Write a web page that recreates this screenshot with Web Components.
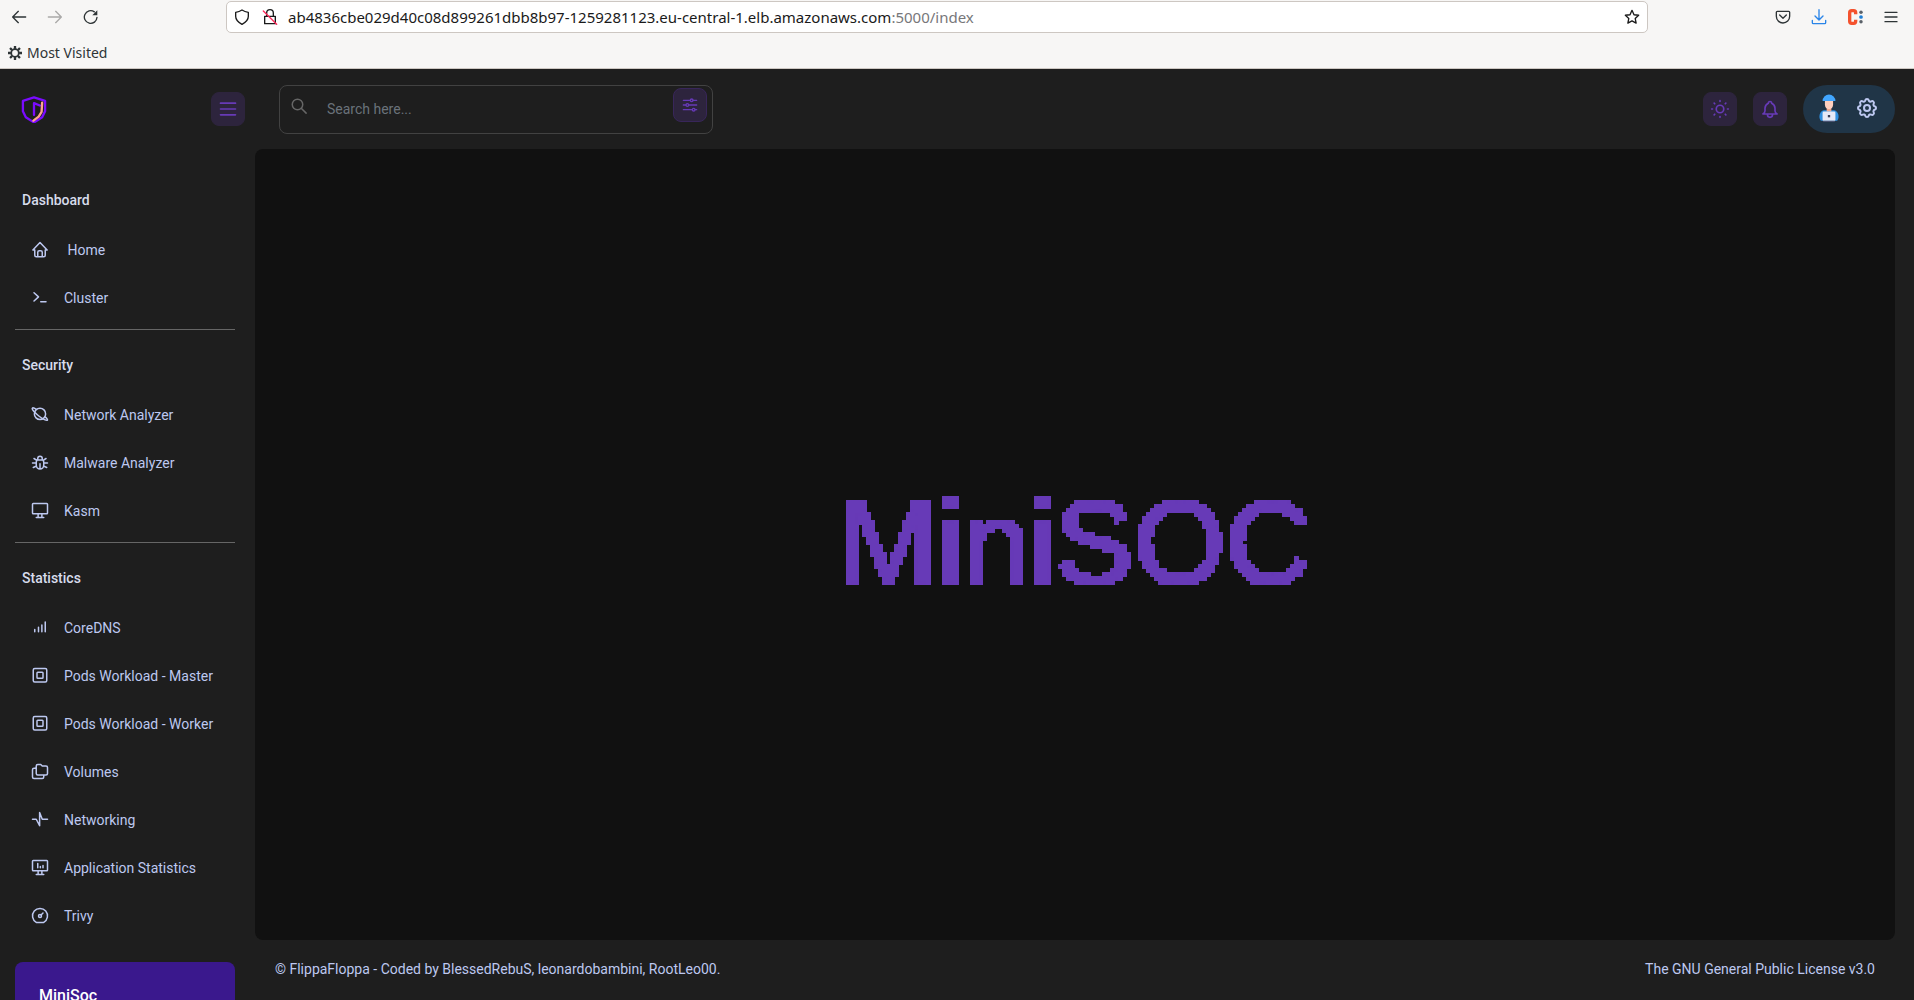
<!DOCTYPE html>
<html lang="en">
<head>
<meta charset="utf-8">
<title>MiniSOC</title>
<style>
  :root { --bg: #1e1e1e; --panel: #111111; --accent: #673ab7; --tint: #2d243d; --text: #bdc8f0; --head: #d7dcec; }
  html, body { height: 100%; }
  body { margin: 0; background: var(--bg); color: var(--text); font: 14px/20px Roboto, "Liberation Sans", sans-serif; overflow: hidden; }
</style>
</head>
<body>
<soc-app></soc-app>
<script>
const ICONS = {
  home: '<path d="M5 12H2.500L12 2l9.500 10H19M5 12v7a2 2 0 0 0 2 2h10a2 2 0 0 0 2-2v-7M9 21v-6a2 2 0 0 1 2-2h2a2 2 0 0 1 2 2v6"/>',
  prompt: '<path d="M4 5l6 5.500L4 16M13 17h7"/>',
  planet: '<path d="M18.800 14.600c2.500 2 3.500 3.700 3.100 4.200-.8 1.200-6.200-1.300-11.500-5.500S.900 4.100 1.800 2.900c.4-.6 2.800-.2 5.400 1.500"/><circle cx="12" cy="10.500" r="7.500"/>',
  bug: '<path d="M9 8V6a3 3 0 0 1 6 0v2M8 8h8a6 6 0 0 1 1 3v4a5 5 0 0 1-10 0v-4a6 6 0 0 1 1-3M2 12h5M17 12h5M12 20v-7M3 18l4.400-2M21 18l-4.400-2M4 6l3.800 2.400M20 6l-3.800 2.400"/>',
  desktop: '<rect x="2" y="2" width="20" height="13.500" rx="1"/><path d="M7 20.500h10M9.500 16v4M14.500 16v4"/>',
  bars: '<path d="M5 17v-3M10 17v-6M14.500 17V8M19 17V4"/>',
  frame: '<rect x="3" y="2" width="18" height="18" rx="2"/><rect x="8" y="7" width="8" height="8" rx="1"/>',
  folders: '<path d="M9 2h4l2 2h5a2 2 0 0 1 2 2v8a2 2 0 0 1-2 2H9a2 2 0 0 1-2-2V4a2 2 0 0 1 2-2M17 16v2.500a2 2 0 0 1-2 2H4a2 2 0 0 1-2-2V9a2 2 0 0 1 2-2h2"/>',
  pulse: '<path d="M2 11h5l4.500 8.500V2L15 11h7"/>',
  analytics: '<rect x="2" y="2" width="20" height="13.500" rx="1"/><path d="M7 20.500h10M9.500 16v4M14.500 16v4M9 11.500V6M12.500 11.500v-1.500M16 11.500V8.500"/>',
  gauge: '<path d="M7 20.500a10 10 0 1 1 10 0z"/><circle cx="12" cy="12" r="2"/><path d="M13.400 10.600L16 8"/>',
  menu: '<path d="M3 5h18M3 12h18M3 19h18"/>',
  sun: '<circle cx="12" cy="12" r="4.500"/><path d="M2 12h1M21 12h1M12 2v1M12 21v1M5 5l.7.7M18.300 18.300l.7.7M5 19l.7-.7M18.300 5.700l.7-.7"/>',
  bell: '<path d="M10 5a2 2 0 0 1 4 0 7 7 0 0 1 4 6v3c0 2 1 3 2.500 4H3.500C5 17 6 16 6 14v-3a7 7 0 0 1 4-6M9 18v1a3 3 0 0 0 6 0v-1"/>',
  search: '<circle cx="10" cy="10" r="7"/><path d="M21.500 21.500L15 15"/>',
  sliders: '<circle cx="14.500" cy="5" r="2"/><path d="M2 5h10.500M16.500 5H22"/><circle cx="8" cy="12" r="2"/><path d="M2 12h4M10 12h12"/><circle cx="17.500" cy="19" r="2"/><path d="M2 19h13.500M19.500 19H22"/>',
  cog: '<path d="M10.300 4.300c.4-1.800 3-1.800 3.400 0a1.700 1.700 0 0 0 2.600 1.100c1.500-1 3.300.8 2.400 2.400a1.700 1.700 0 0 0 1 2.500c1.800.4 1.800 3 0 3.400a1.700 1.700 0 0 0-1 2.600c.9 1.500-.9 3.300-2.400 2.400a1.700 1.700 0 0 0-2.600 1c-.4 1.800-3 1.800-3.400 0a1.700 1.700 0 0 0-2.600-1c-1.500.9-3.300-.9-2.400-2.400a1.700 1.700 0 0 0-1-2.600c-1.800-.4-1.800-3 0-3.400a1.700 1.700 0 0 0 1-2.500c-.9-1.600.9-3.400 2.400-2.400 1 .6 2.300.1 2.600-1.100z"/><circle cx="12" cy="12" r="3"/>',
  back: '<path d="M22 12H3M11 3.500L2.500 12l8.500 8.500"/>',
  forward: '<path d="M2 12h19M13 3.500l8.500 8.500-8.500 8.500"/>',
  reload: '<path d="M21 12.500a9.500 9.500 0 1 1-4-8.200"/><path d="M21.500 2v7.500H14z" fill="currentColor" stroke="none"/>',
  shield: '<path d="M12 1.500c3 2 6 3 9.500 3.500v6c0 5-3.500 9-9.500 12-6-3-9.500-7-9.500-12V5C6 4.500 9 3.500 12 1.500z"/>',
  lock: '<path d="M7 11V6a5 5 0 0 1 10 0v5M4 11h16v11H4z"/><path d="M2 3l20 20" stroke="#ff2b5c"/>',
  star: '<path d="M12 2l3 6.600 7 .8-5.200 4.800 1.400 7-6.200-3.500-6.200 3.500 1.400-7L2 9.400l7-.8z"/>',
  pocket: '<path d="M3.500 3.500h17a1.500 1.500 0 0 1 1.500 1.500v6a10 10 0 0 1-20 0V5a1.500 1.500 0 0 1 1.500-1.500zM7 9l5 5 5-5"/>',
  download: '<path d="M12 1v15M6 10.500l6 6 6-6M2 17v3.500a1.500 1.500 0 0 0 1.500 1.500h17a1.500 1.500 0 0 0 1.500-1.500V17"/>',
  gear: '<circle cx="12" cy="12" r="6.500" stroke-width="3"/><path stroke-width="4" stroke-linecap="butt" d="M12 0v5M12 19v5M0 12h5M19 12h5M3.500 3.500L7 7M17 17l3.500 3.500M3.500 20.500L7 17M17 7l3.500-3.500"/>',
  ext: '<path d="M13 8V5.500a3 3 0 0 0-3-3H7a3 3 0 0 0-3 3v13a3 3 0 0 0 3 3h3a3 3 0 0 0 3-3V16" stroke="#f4522d" stroke-width="5" stroke-linecap="butt"/><g stroke="none"><circle cx="21" cy="5" r="2.600" fill="#5a6068"/><circle cx="21" cy="12" r="2.800" fill="#1f7fd6"/><circle cx="21" cy="19" r="2.600" fill="#5a6068"/></g>',
  brand: '<path d="M12 2L2.500 5v9L5 19l7 4.500 7-4.500 2.500-5V5z" stroke="#7a0bff"/><path d="M12 17V7l5 2" stroke="#7a0bff"/><path d="M19 6.500l-.5 8-2.500 4-4.500 3.500" stroke="#ffa38f"/>',
  worker: '<g stroke="none"><path d="M5 23c-2.500-3-1-9 3-9h8c4 0 5.500 6 3 9z" fill="#2f8fe0"/><path d="M10 11h4v4h-4z" fill="#f0a68c"/><path d="M8.500 5h7v4c0 2.500-1.500 4-3.500 4s-3.500-1.500-3.500-4z" fill="#ffd0bf"/><path d="M6.500 6a5.500 5.500 0 0 1 11 0z" fill="#41a6ff"/><rect x="6.500" y="15" width="11" height="8" rx="1" fill="#e6e9f7"/><rect x="7" y="23" width="10" height="1" fill="#4a5270"/><path d="M11 18h2v2h-2z" fill="#39405a"/></g>'
};

class SocIcon extends HTMLElement {
  connectedCallback() {
    this.attachShadow({ mode: 'open' }).innerHTML = `
      <style>:host{display:block;flex:none;width:var(--icon,20px);height:var(--icon,20px)} svg{display:block;width:100%;height:100%}</style>
      <svg viewBox="0 0 24 24" fill="none" stroke="currentColor" stroke-width="2" stroke-linecap="round" stroke-linejoin="round" aria-hidden="true">${ICONS[this.getAttribute('name')]}</svg>`;
  }
}
customElements.define('soc-icon', SocIcon);

function define(name, html) {
  const template = document.createElement('template');
  template.innerHTML = html;
  customElements.define(name, class extends HTMLElement {
    constructor() {
      super();
      this.attachShadow({ mode: 'open' }).append(template.content.cloneNode(true));
    }
  });
}

define('icon-button', `
  <style>
    :host { display: block; flex: none; }
    button { display: flex; align-items: center; justify-content: center; width: 34px; height: 34px; padding: 0; border: 1px solid var(--edge, var(--tint)); border-radius: 8px; background: var(--tint); color: var(--accent); }
  </style>
  <button type="button"><slot></slot></button>`);

define('browser-bar', `
  <style>
    :host { display: block; background: #f7f6f5; border-bottom: 1px solid #cdc7c2; color: #2e3436; font: 15px/20px "Noto Sans", sans-serif; }
    button { display: flex; padding: 0; border: 0; background: none; color: inherit; font: inherit; }
    .row { display: flex; align-items: center; height: 34px; --icon: 16px; }
    .nav { display: flex; gap: 20px; width: 226px; box-sizing: border-box; padding-left: 11px; }
    .nav button[disabled] { color: #aaa9a8; }
    .url { display: flex; align-items: center; flex: 1; height: 32px; box-sizing: border-box; padding: 0 7px; border: 1px solid #cdc7c2; border-radius: 5px; background: #fff; color: #1a1a1a; }
    .url soc-icon + soc-icon { margin-left: 12px; }
    input { padding: 0; border: 0; background: none; color: inherit; font: inherit; outline: none; }
    .host { field-sizing: content; margin-left: 10px; }
    .path { flex: 1; min-width: 0; color: #77777a; }
    .tools { display: flex; justify-content: space-between; width: 266px; box-sizing: border-box; padding: 0 15px 0 127px; }
    .marks { display: flex; align-items: center; height: 34px; box-sizing: border-box; padding: 4px 0 0 8px; font-size: 14px; }
    .marks button { align-items: center; gap: 5px; --icon: 14px; }
  </style>
  <div class="row">
    <div class="nav">
      <button aria-label="Back"><soc-icon name="back"></soc-icon></button>
      <button aria-label="Forward" disabled><soc-icon name="forward"></soc-icon></button>
      <button aria-label="Reload"><soc-icon name="reload"></soc-icon></button>
    </div>
    <div class="url">
      <soc-icon name="shield"></soc-icon><soc-icon name="lock"></soc-icon>
      <input class="host" aria-label="Host" value="ab4836cbe029d40c08d899261dbb8b97-1259281123.eu-central-1.elb.amazonaws.com">
      <input class="path" aria-label="Port and path" value=":5000/index">
      <button aria-label="Bookmark this page"><soc-icon name="star"></soc-icon></button>
    </div>
    <div class="tools">
      <button aria-label="Save to Pocket"><soc-icon name="pocket"></soc-icon></button>
      <button aria-label="Downloads" style="color:#2a85e8"><soc-icon name="download"></soc-icon></button>
      <button aria-label="Extension"><soc-icon name="ext"></soc-icon></button>
      <button aria-label="Menu"><soc-icon name="menu"></soc-icon></button>
    </div>
  </div>
  <div class="marks"><button><soc-icon name="gear"></soc-icon>Most Visited</button></div>`);

define('top-bar', `
  <style>
    :host { display: flex; align-items: center; height: 80px; padding: 0 19px 0 20px; }
    .brand { --icon: 28px; display: flex; }
    .toggle { margin: 0 34px 0 163px; }
    .search { display: flex; align-items: flex-start; width: 434px; height: 49px; box-sizing: border-box; padding: 2px 5px 0 10px; border: 1px solid #424242; border-radius: 8px; }
    .search label { padding-top: 9px; color: #666; --icon: 18px; }
    input { flex: 1; min-width: 0; height: 43px; box-sizing: border-box; margin-left: 19px; padding: 0; border: 0; outline: 0; background: none; color: var(--text); font: inherit; }
    input::placeholder { color: #6a727a; opacity: 1; }
    .search icon-button { --edge: #38265a; --icon: 16px; }
    .right { display: flex; align-items: center; gap: 16px; margin-left: auto; }
    .profile { display: flex; align-items: center; gap: 12px; height: 48px; width: 92px; padding: 0 15px 3px 12px; box-sizing: border-box; border: 0; border-radius: 24px; background: #203547; color: var(--text); --icon: 24px; }
    .profile soc-icon:first-child { --icon: 28px; }
  </style>
  <a class="brand" href="#home" aria-label="MiniSOC"><soc-icon name="brand"></soc-icon></a>
  <icon-button class="toggle"><soc-icon name="menu"></soc-icon></icon-button>
  <div class="search">
    <label for="q" aria-label="Search"><soc-icon name="search"></soc-icon></label>
    <input id="q" type="text" placeholder="Search here...">
    <icon-button><soc-icon name="sliders"></soc-icon></icon-button>
  </div>
  <div class="right">
    <icon-button><soc-icon name="sun"></soc-icon></icon-button>
    <icon-button><soc-icon name="bell"></soc-icon></icon-button>
    <button class="profile" aria-label="Account settings"><soc-icon name="worker"></soc-icon><soc-icon name="cog"></soc-icon></button>
  </div>`);

define('nav-group', `
  <style>
    :host { display: block; padding: 23px 0 7px; border-bottom: 1px solid var(--rule, #666); }
    h2 { margin: 0 0 14px; padding: 0 7px; font-size: 14px; line-height: 24px; font-weight: 500; color: var(--head); }
  </style>
  <h2><slot name="title"></slot></h2>
  <slot></slot>`);

class NavItem extends HTMLElement {
  connectedCallback() {
    this.attachShadow({ mode: 'open' }).innerHTML = `
      <style>
        :host { display: block; --icon: 18px; }
        a { display: flex; align-items: center; gap: 15px; height: 48px; padding-left: 16px; color: inherit; text-decoration: none; white-space: nowrap; }
      </style>
      <a href="#${this.getAttribute('icon')}"><soc-icon name="${this.getAttribute('icon')}"></soc-icon><span><slot></slot></span></a>`;
  }
}
customElements.define('nav-item', NavItem);

define('side-bar', `
  <style>
    :host { display: block; padding: 16px 20px 0 15px; }
    nav-group:last-of-type { --rule: transparent; }
    .card { margin-top: 14px; padding: 24px; height: 160px; border-radius: 8px; background: #3a188d; }
    .card h3 { margin: 0; font-size: 16px; line-height: 20px; font-weight: 500; color: #fff; }
  </style>
  <nav>
    <nav-group><span slot="title">Dashboard</span>
      <nav-item icon="home">&nbsp;Home</nav-item>
      <nav-item icon="prompt">Cluster</nav-item>
    </nav-group>
    <nav-group><span slot="title">Security</span>
      <nav-item icon="planet">Network Analyzer</nav-item>
      <nav-item icon="bug">Malware Analyzer</nav-item>
      <nav-item icon="desktop">Kasm</nav-item>
    </nav-group>
    <nav-group><span slot="title">Statistics</span>
      <nav-item icon="bars">CoreDNS</nav-item>
      <nav-item icon="frame">Pods Workload - Master</nav-item>
      <nav-item icon="frame">Pods Workload - Worker</nav-item>
      <nav-item icon="folders">Volumes</nav-item>
      <nav-item icon="pulse">Networking</nav-item>
      <nav-item icon="analytics">Application Statistics</nav-item>
      <nav-item icon="gauge">Trivy</nav-item>
    </nav-group>
  </nav>
  <div class="card"><h3>MiniSoc</h3></div>`);

define('pixel-title', `
  <style>
    :host { display: block; }
    svg { display: block; width: 0; height: 0; }
    h1 { margin: 0; font: 400 118px/140px "Liberation Sans", sans-serif; color: var(--accent); -webkit-text-stroke: 3px var(--accent); filter: url(#mosaic); }
  </style>
  <svg aria-hidden="true"><filter id="mosaic" x="0" y="0" width="100%" height="100%" color-interpolation-filters="sRGB">
    <feFlood x="1" y="1" width="1" height="1" flood-color="#000"/>
    <feComposite width="4" height="4" x="0" y="0"/>
    <feTile result="grid"/>
    <feComposite in="SourceGraphic" in2="grid" operator="in"/>
    <feComponentTransfer><feFuncA type="discrete" tableValues="0 1"/></feComponentTransfer>
    <feMorphology operator="dilate" radius="2"/>
  </filter></svg>
  <h1><slot></slot></h1>`);

define('soc-app', `
  <style>
    :host { display: flex; flex-direction: column; height: 100vh; overflow: hidden; }
    .body { display: flex; flex: 1; min-height: 0; }
    side-bar { width: 220px; flex: none; }
    .content { display: flex; flex-direction: column; flex: 1; min-width: 0; padding-right: 19px; }
    main { display: flex; flex: 1; align-items: center; justify-content: center; border-radius: 8px; background: var(--panel); padding-bottom: 4px; }
    footer { display: flex; align-items: center; justify-content: space-between; height: 58px; padding: 0 20px 2px; }
  </style>
  <browser-bar></browser-bar>
  <top-bar></top-bar>
  <div class="body">
    <side-bar></side-bar>
    <div class="content">
      <main><pixel-title>MiniSOC</pixel-title></main>
      <footer><span>© FlippaFloppa - Coded by BlessedRebuS, leonardobambini, RootLeo00.</span><span>The GNU General Public License v3.0</span></footer>
    </div>
  </div>`);
</script>
</body>
</html>
